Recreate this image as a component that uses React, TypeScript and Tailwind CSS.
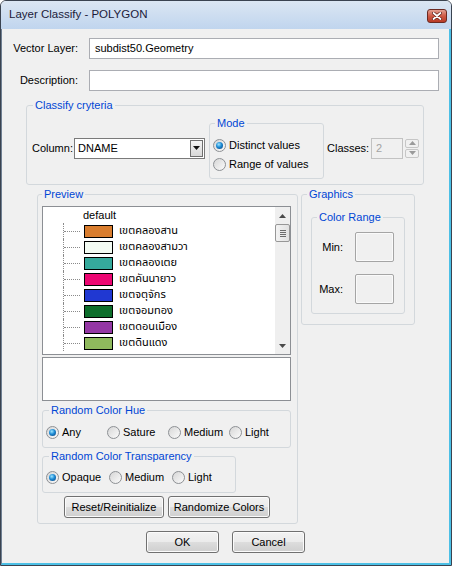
import type { ReactNode } from 'react'

const items: [string, string][] = [
  ['เขตคลองสาน', '#d97d2e'],
  ['เขตคลองสามวา', '#f3fbf3'],
  ['เขตคลองเตย', '#35aa9c'],
  ['เขตคันนายาว', '#ec0672'],
  ['เขตจตุจักร', '#2038d2'],
  ['เขตจอมทอง', '#0d6e2b'],
  ['เขตดอนเมือง', '#9437a4'],
  ['เขตดินแดง', '#8fb95d'],
]

function Group({
  title,
  className,
  legend,
  children,
}: {
  title: string
  className: string
  legend: string
  children: ReactNode
}) {
  return (
    <fieldset className={`rounded-[3px] border border-[#d3d8dc] ${className}`}>
      <legend className={`px-[2px] leading-[13px] text-[#0046d5] ${legend}`}>{title}</legend>
      {children}
    </fieldset>
  )
}

function Radio({ label, checked, className = '' }: { label: string; checked?: boolean; className?: string }) {
  return (
    <div className={`flex items-center gap-[3px] ${className}`}>
      <span className="flex h-[13px] w-[13px] shrink-0 items-center justify-center rounded-full border border-[#8d9094] bg-[linear-gradient(135deg,#d6d6d6,#fbfbfb)]">
        {checked && (
          <span className="h-[7px] w-[7px] rounded-full bg-[radial-gradient(circle_at_40%_35%,#9fe6ff_0%,#1c8ad4_45%,#0a3a74_100%)]" />
        )}
      </span>
      <span>{label}</span>
    </div>
  )
}

function Button({ label, className }: { label: string; className: string }) {
  return (
    <button className={`h-[22px] rounded-[3px] border border-[#707070] bg-[linear-gradient(#f2f2f2_0%,#ebebeb_50%,#dddddd_50%,#cfcfcf_100%)] text-[11px] leading-none text-black shadow-[inset_0_0_0_1px_#fbfbfb] ${className}`}>
      {label}
    </button>
  )
}

function Arrow({ up, color = '#4a4a4a' }: { up?: boolean; color?: string }) {
  return (
    <svg width="7" height="4" viewBox="0 0 7 4">
      <path d={up ? 'M0 4 L3.5 0 L7 4 Z' : 'M0 0 L7 0 L3.5 4 Z'} fill={color} />
    </svg>
  )
}

export default function App() {
  return (
    <div className="flex h-[566px] w-[452px] flex-col overflow-hidden rounded-t-[6px] border border-[#3a4350] bg-[#f0f0f0] font-['Liberation_Sans','Noto_Sans_Thai','DejaVu_Sans',sans-serif] text-[11px] text-black">
      {/* Title bar */}
      <div className="flex h-[28px] shrink-0 items-center justify-between bg-[linear-gradient(#dbe6f3,#c0d5ee)] pl-[8px] pr-[4px]">
        <span className="text-[11.5px] text-[#1b1b3a]">Layer Classify - POLYGON</span>
        <div className="mt-[2px] flex h-[14px] w-[20px] items-center justify-center rounded-[3px] border border-[#6b2a22] bg-[linear-gradient(#e3a193,#cf5a45_50%,#b83a26_100%)]">
          <svg width="10" height="8" viewBox="0 0 10 8">
            <path d="M1.5 1 L8.5 7 M8.5 1 L1.5 7" stroke="#5a1a12" strokeWidth="3.2" strokeLinecap="round" />
            <path d="M1.5 1 L8.5 7 M8.5 1 L1.5 7" stroke="#ffffff" strokeWidth="1.8" strokeLinecap="round" />
          </svg>
        </div>
      </div>

      {/* Client */}
      <div className="flex flex-1 flex-col border-b-2 border-l border-r-2 border-b-[#4cc0e6] border-l-[#6f7f92] border-r-[#4cc0e6]">
        <div className="mt-[9px] flex items-center">
          <span className="w-[76px] text-right">Vector Layer:</span>
          <div className="ml-[11px] flex h-[21px] w-[350px] items-center border border-[#abadb3] bg-white pl-[5px]">
            subdist50.Geometry
          </div>
        </div>
        <div className="mt-[11px] flex items-center">
          <span className="w-[76px] text-right">Description:</span>
          <div className="ml-[11px] h-[21px] w-[350px] border border-[#abadb3] bg-white" />
        </div>

        {/* Classify cryteria */}
        <Group title="Classify cryteria" className="ml-[24px] mt-[8px] w-[398px]" legend="ml-[6px]">
          <div className="flex h-[72px] items-center pb-[5px] pl-[5px] pt-[5px]">
            <span className="w-[42px]">Column:</span>
            <div className="flex h-[21px] w-[131px] items-center justify-between border border-[#7a7a7a] bg-white pl-[3px] pr-[1px]">
              <span>DNAME</span>
              <div className="flex h-[17px] w-[13px] items-center justify-center border border-[#6f6f6f] bg-[linear-gradient(#f4f4f4,#d8d8d8)]">
                <Arrow color="#111" />
              </div>
            </div>
            <Group title="Mode" className="ml-[4px] h-[62px] w-[115px]" legend="ml-[5px]">
              <div className="pl-[3px] pt-[6px]">
                <Radio label="Distinct values" checked className="h-[19px]" />
                <Radio label="Range of values" className="h-[19px]" />
              </div>
            </Group>
            <span className="ml-[3px] w-[44px]">Classes:</span>
            <div className="flex h-[21px] w-[32px] items-center border border-[#c2c2c2] pl-[4px] text-[#a3a3a3]">2</div>
            <div className="ml-[2px] flex w-[14px] flex-col gap-[1px]">
              <div className="flex h-[9px] items-center justify-center rounded-[2px] border border-[#c6c6c6]">
                <Arrow up color="#9a9a9a" />
              </div>
              <div className="flex h-[9px] items-center justify-center rounded-[2px] border border-[#c6c6c6]">
                <Arrow color="#9a9a9a" />
              </div>
            </div>
          </div>
        </Group>

        <div className="ml-[35px] mt-[3px] flex items-start gap-[3px]">
          {/* Preview */}
          <Group title="Preview" className="w-[261px]" legend="ml-[4px]">
            <div className="pb-[5px] pl-[4px] pt-[5px]">
              <div className="flex h-[149px] w-[249px] border border-[#8c8f94] bg-white">
                <div className="flex-1 overflow-hidden">
                  <div className="flex h-[16px] items-center pl-[40px]">default</div>
                  {items.map(([name, color]) => (
                    <div key={name} className="flex h-[16px] items-center">
                      <div className="ml-[20px] flex h-[16px] w-[17px] items-center border-l border-dotted border-l-[#8a8a8a]">
                        <div className="w-[16px] border-t border-dotted border-t-[#8a8a8a]" />
                      </div>
                      <div className="ml-[4px] h-[13px] w-[29px] border border-black" style={{ background: color }} />
                      <span className="ml-[6px] font-['Noto_Sans_Thai','DejaVu_Sans',sans-serif]">{name}</span>
                    </div>
                  ))}
                </div>
                <div className="flex w-[15px] flex-col bg-[#efefef]">
                  <div className="flex h-[17px] items-center justify-center">
                    <Arrow up />
                  </div>
                  <div className="flex h-[18px] flex-col items-center justify-center gap-[1px] rounded-[2px] border border-[#979797] bg-[linear-gradient(90deg,#f3f3f3,#e2e2e2)]">
                    <div className="h-[1px] w-[6px] bg-[#6d6d6d]" />
                    <div className="h-[1px] w-[6px] bg-[#6d6d6d]" />
                    <div className="h-[1px] w-[6px] bg-[#6d6d6d]" />
                    <div className="h-[1px] w-[6px] bg-[#6d6d6d]" />
                  </div>
                  <div className="flex-1" />
                  <div className="flex h-[17px] items-center justify-center">
                    <Arrow />
                  </div>
                </div>
              </div>
              <div className="mt-[2px] h-[44px] w-[249px] border border-[#8c8f94] bg-white" />

              <Group title="Random Color Hue" className="mt-[3px] w-[249px]" legend="ml-[6px]">
                <div className="flex h-[30px] items-center pl-[3px]">
                  <Radio label="Any" checked className="w-[61px]" />
                  <Radio label="Sature" className="w-[61px]" />
                  <Radio label="Medium" className="w-[61px]" />
                  <Radio label="Light" className="w-[61px]" />
                </div>
              </Group>

              <Group title="Random Color Transparency" className="mt-[2px] w-[194px]" legend="ml-[6px]">
                <div className="flex h-[29px] items-center pl-[3px]">
                  <Radio label="Opaque" checked className="w-[63px]" />
                  <Radio label="Medium" className="w-[63px]" />
                  <Radio label="Light" className="w-[63px]" />
                </div>
              </Group>

              <div className="ml-[22px] mt-[3px] flex gap-[4px]">
                <Button label="Reset/Reinitialize" className="w-[100px]" />
                <Button label="Randomize Colors" className="w-[102px]" />
              </div>
            </div>
          </Group>

          {/* Graphics */}
          <Group title="Graphics" className="w-[114px]" legend="ml-[5px]">
            <div className="pb-[10px] pl-[9px] pt-[10px]">
              <Group title="Color Range" className="w-[94px]" legend="ml-[5px]">
                <div className="flex flex-col gap-[12px] pb-[9px] pt-[8px]">
                  <div className="flex items-center">
                    <span className="w-[31px] text-right">Min:</span>
                    <div className="ml-[12px] h-[30px] w-[39px] rounded-[2px] border border-[#a5a5a5] bg-[#f0f0f0] shadow-[inset_0_0_0_1px_#fafafa]" />
                  </div>
                  <div className="flex items-center">
                    <span className="w-[31px] text-right">Max:</span>
                    <div className="ml-[12px] h-[30px] w-[39px] rounded-[2px] border border-[#a5a5a5] bg-[#f0f0f0] shadow-[inset_0_0_0_1px_#fafafa]" />
                  </div>
                </div>
              </Group>
            </div>
          </Group>
        </div>

        <div className="mt-[7px] flex justify-center gap-[13px]">
          <Button label="OK" className="w-[73px]" />
          <Button label="Cancel" className="w-[73px]" />
        </div>
      </div>
    </div>
  )
}
